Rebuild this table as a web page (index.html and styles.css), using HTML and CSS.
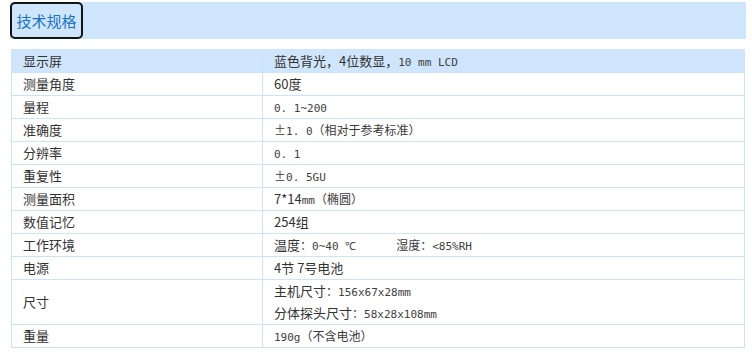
FILE: index.html
```html
<!DOCTYPE html>
<html lang="zh">
<head>
<meta charset="utf-8">
<link rel="stylesheet" href="styles.css">
</head>
<body>
<div class="page">
  <div class="band">
    <div class="tab">技术规格</div>
  </div>
  <table class="specs">
    <tr class="head"><td class="k">显示屏</td><td class="v">蓝色背光，4位数显，<span class="m">10 mm LCD</span></td></tr>
    <tr><td class="k">测量角度</td><td class="v">60度</td></tr>
    <tr><td class="k">量程</td><td class="v"><span class="m">0. 1~200</span></td></tr>
    <tr><td class="k">准确度</td><td class="v"><span class="s">±</span><span class="m">1. 0</span><span class="s">（相对于参考标准）</span></td></tr>
    <tr><td class="k">分辨率</td><td class="v"><span class="m">0. 1</span></td></tr>
    <tr><td class="k">重复性</td><td class="v"><span class="s">±</span><span class="m">0. 5GU</span></td></tr>
    <tr><td class="k">测量面积</td><td class="v">7*14<span class="m">mm</span><span class="s">（椭圆）</span></td></tr>
    <tr><td class="k">数值记忆</td><td class="v">254组</td></tr>
    <tr><td class="k">工作环境</td><td class="v">温度<span class="s">：</span><span class="m">0~40 ℃</span><span class="gap"></span><span class="s">湿度：</span><span class="m">&lt;85%RH</span></td></tr>
    <tr><td class="k">电源</td><td class="v">4节 7号电池</td></tr>
    <tr><td class="k">尺寸</td><td class="v"><div class="line">主机尺寸<span class="s">：</span><span class="m">156x67x28mm</span></div><div class="line">分体探头尺寸<span class="s">：</span><span class="m">58x28x108mm</span></div></td></tr>
    <tr><td class="k">重量</td><td class="v"><span class="m">190g</span><span class="s">（不含电池）</span></td></tr>
  </table>
</div>
</body>
</html>
```
FILE: styles.css
```css
html, body {
  margin: 0;
  padding: 0;
  background: #ffffff;
}
.page {
  padding: 2px 0 0 10px;
  font-family: "Noto Sans CJK SC", "Liberation Sans", sans-serif;
  color: #333333;
}
.band {
  width: 736px;
  height: 37px;
  background: #cfe5fb;
  display: flex;
}
.tab {
  box-sizing: border-box;
  width: 73px;
  height: 37px;
  border: 2px solid #141414;
  border-radius: 5px;
  display: flex;
  align-items: center;
  justify-content: center;
  font-size: 15px;
  line-height: 1;
  color: #1a74bf;
  padding-bottom: 1px;
}
.specs {
  margin: 10px 0 0 1px;
  width: 734px;
  border-collapse: collapse;
  table-layout: fixed;
  font-size: 13px;
}
.specs td {
  border: 1px solid #cde3f9;
  padding: 0 11px;
  height: 22px;
  line-height: 22px;
  vertical-align: middle;
  box-sizing: border-box;
  white-space: nowrap;
}
.specs td.k {
  width: 251px;
}
.specs tr.head td {
  background: #cfe5fb;
}
.line {
  height: 22px;
  line-height: 22px;
  overflow: hidden;
  white-space: nowrap;
}
.m {
  font-family: "DejaVu Sans Mono", "Liberation Mono", monospace;
  font-size: 11px;
  line-height: 1;
  color: #404040;
}
.s {
  font-size: 12px;
  line-height: 1;
  color: #3a3a3a;
}
.gap {
  display: inline-block;
  width: 40px;
  height: 1px;
}
```
